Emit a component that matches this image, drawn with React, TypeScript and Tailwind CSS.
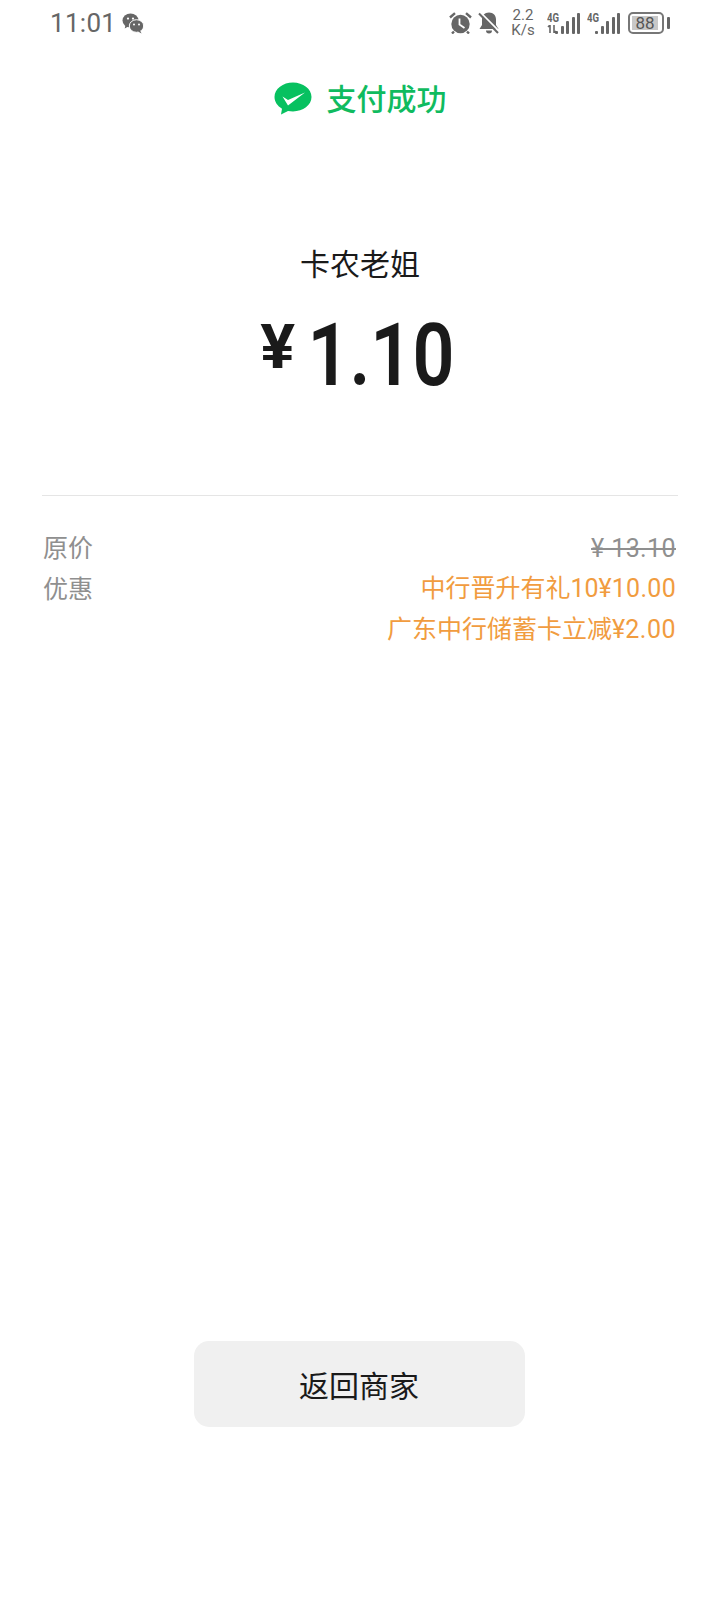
import React from "react";

const cjk = "font-['Roboto','Noto_Sans_CJK_SC',sans-serif]";

function WeChatSmall() {
  return (
    <svg width="22" height="21" viewBox="0 0 22 21" className="block">
      <ellipse cx="8.5" cy="7.5" rx="8" ry="7" fill="#666" />
      <path d="M3.5 12l-.8 3.4 3.6-2z" fill="#666" />
      <circle cx="6" cy="5.6" r="1.1" fill="#fff" />
      <circle cx="11" cy="5.6" r="1.1" fill="#fff" />
      <ellipse cx="14.5" cy="13" rx="7.2" ry="6.3" fill="#666" stroke="#fff" strokeWidth="1" />
      <path d="M18 17.5l1.6 3-3.6-2z" fill="#666" />
      <circle cx="12" cy="11.6" r="1" fill="#fff" />
      <circle cx="17" cy="11.6" r="1" fill="#fff" />
    </svg>
  );
}

function Alarm() {
  return (
    <svg width="23" height="22" viewBox="0 0 23 22" className="block">
      <circle cx="11.5" cy="12" r="9.2" fill="#666" />
      <path d="M1 5.5L6 1.2M22 5.5L17 1.2M5 19.5l-2 2M18 19.5l2 2" stroke="#666" strokeWidth="2.4" fill="none" />
      <path d="M10.5 6.5v6l5 3.5" stroke="#fff" strokeWidth="1.8" fill="none" />
    </svg>
  );
}

function Mute() {
  return (
    <svg width="22" height="22" viewBox="0 0 22 22" className="block">
      <path d="M11 0.500c-4.500 0-7 3-7 7v5.500l-2.500 4h19L18 13V7.500c0-4-2.500-7-7-7z" fill="#666" />
      <path d="M8 18.500a3 3 0 0 0 6 0z" fill="#666" />
      <path d="M2.500 0.500L22 20" stroke="#fff" strokeWidth="1.800" />
      <path d="M1 1.500L20 21" stroke="#666" strokeWidth="2" />
    </svg>
  );
}

function Bars({ small }: { small?: boolean }) {
  const hs = [3, 8, 13, 17, 21];
  return (
    <div className="relative h-[22px] w-[33px]">
      <span className="absolute left-0 top-0 origin-left font-['Roboto',sans-serif] text-[12px] font-bold leading-[12px] text-[#666] [transform:scaleX(0.8)]">4G</span>
      {small && (
        <svg width="12" height="8" viewBox="0 0 12 8" className="absolute bottom-[1px] left-0">
          <path d="M3 0v8M1 2l2-2M7 0v8M7 8l2-2" stroke="#666" strokeWidth="1.600" fill="none" />
        </svg>
      )}
      <div className="absolute bottom-0 right-0 flex items-end gap-[2.500px]">
        {hs.map((h, i) => (
          <div key={i} style={{ height: h }} className="w-[3px] rounded-[1px] bg-[#666]" />
        ))}
      </div>
    </div>
  );
}

function Battery() {
  return (
    <div className="flex items-center gap-[3px]">
      <div className="flex h-[22px] w-[36px] items-center rounded-[5px] border-2 border-[#777] p-[2px]">
        <div className="flex h-full w-[26px] items-center justify-center bg-[#c8c8c8] font-['Roboto',sans-serif] text-[17px] leading-none text-[#555]">
          88
        </div>
      </div>
      <div className="h-[12px] w-[3px] rounded-[1px] bg-[#666]" />
    </div>
  );
}

function WeChatPay() {
  return (
    <svg width="38" height="33" viewBox="0 0 38 33" className="mb-[3px] block">
      <path d="M19 0.500C9 .5 .5 6.800 .5 15c0 4.800 3 9 7.500 11.700L7 32.500l7-3.600c1.600.3 3.300.5 5 .5 10 0 18.500-6.300 18.500-14.400S29 .5 19 .5z" fill="#07c160" />
      <path d="M8.500 14.500l5.500 3.500L31 10.500 14 23.500z" fill="#fff" />
    </svg>
  );
}

export default function App() {
  return (
    <div className={`flex h-[1600px] w-[720px] flex-col bg-white ${cjk}`}>
      <div className="flex h-[44px] items-center justify-between pl-[50px] pr-[50px] pt-[2px]">
        <div className="flex items-center gap-[6px]">
          <span className="text-[26px] leading-none tracking-[0.3px] text-[#666]">11:01</span>
          <WeChatSmall />
        </div>
        <div className="flex items-center">
          <div className="ml-[2px]"><Alarm /></div>
          <div className="ml-[6px]"><Mute /></div>
          <div className="ml-[11px] flex w-[24px] flex-col items-center text-[15px] leading-[15px] text-[#666]">
            <span>2.2</span>
            <span>K/s</span>
          </div>
          <div className="ml-[12px]"><Bars small /></div>
          <div className="ml-[7px]"><Bars /></div>
          <div className="ml-[8px]"><Battery /></div>
        </div>
      </div>

      <div className="mt-[36px] flex h-[40px] items-center justify-center gap-[15px]">
        <WeChatPay />
        <span className="text-[30px] font-medium leading-none text-[#10bb5f]">支付成功</span>
      </div>

      <div className="mt-[125px] text-center text-[30px] leading-[40px] text-[#1a1a1a]">卡农老姐</div>

      <div className="mt-[20px] flex h-[100px] items-center justify-center pr-[4px] font-['Roboto',sans-serif] text-[#1a1a1a]">
        <span className="mb-[17px] mr-[12px] inline-block text-[62px] font-bold leading-none [transform:scaleX(1.05)]">¥</span>
        <span className="-mx-[13px] inline-block text-[87px] font-semibold leading-none [transform:scaleX(0.846)]">1.10</span>
      </div>

      <div className="mx-[42px] mt-[90px] h-px bg-[#e5e5e5]" />

      <div className="mx-[43px] mt-[32px] flex flex-col text-[25px] leading-[41px]">
        <div className="flex justify-between text-[#8f8f8f]">
          <span>原价</span>
          <span className="pr-[1px] tracking-[0.4px] line-through">¥ 13.10</span>
        </div>
        <div className="flex justify-between text-[#8f8f8f]">
          <span>优惠</span>
          <span className="-mt-[1px] pr-[1px] text-[#f19c3f]">中行晋升有礼10¥<span className="tracking-[0.3px]">10.00</span></span>
        </div>
        <div className="-mt-[1px] pr-[1px] text-right text-[#f19c3f]">广东中行储蓄卡立减¥<span className="tracking-[0.5px]">2.00</span></div>
      </div>

      <div className="flex flex-1 flex-col items-center justify-end pb-[173px] pr-[2px]">
        <div className="flex h-[86px] w-[331px] items-center justify-center rounded-[15px] bg-[#f0f0f0] pt-[4px] text-[30px] text-[#1a1a1a]">
          返回商家
        </div>
      </div>
    </div>
  );
}
